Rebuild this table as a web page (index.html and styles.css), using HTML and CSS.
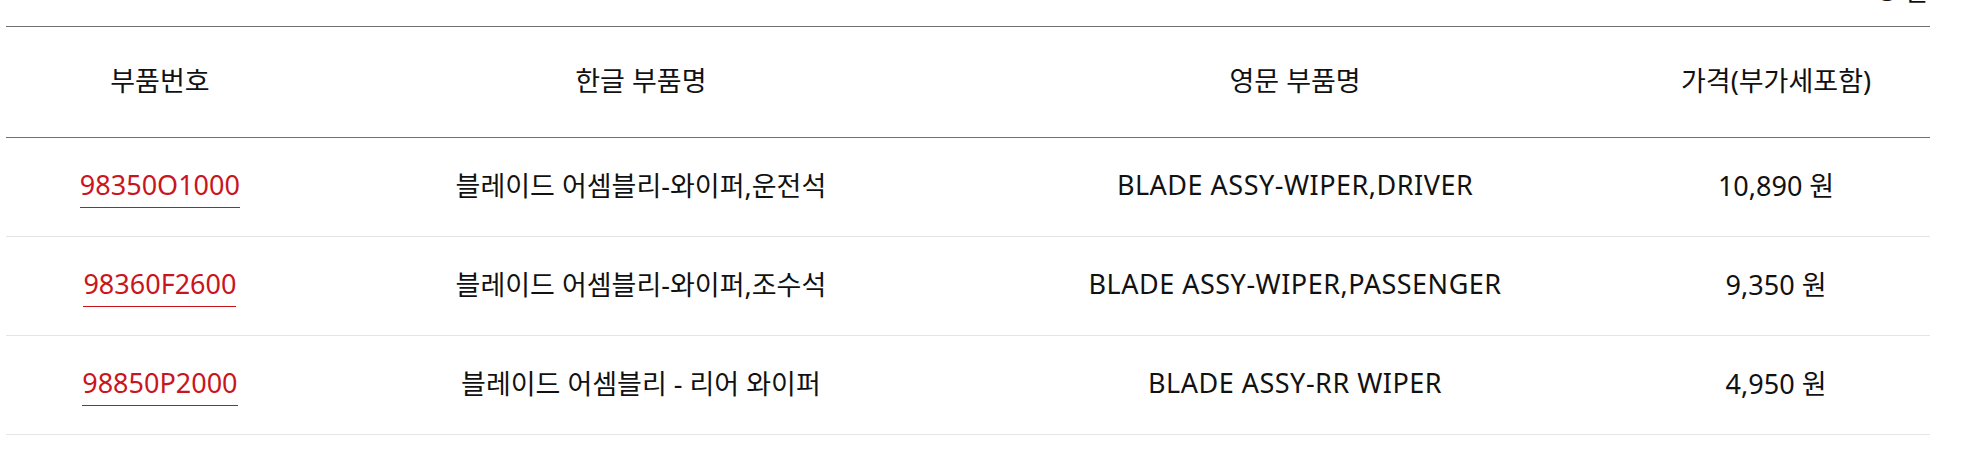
FILE: index.html
```html
<!DOCTYPE html>
<html lang="ko">
<head>
<meta charset="utf-8">
<title>부품 목록</title>
<link rel="stylesheet" href="styles.css">
</head>
<body>
<div class="count"><span class="count-text">3 건</span></div>
<div class="table">
  <div class="row head">
    <div class="cell">부품번호</div>
    <div class="cell">한글 부품명</div>
    <div class="cell">영문 부품명</div>
    <div class="cell">가격(부가세포함)</div>
  </div>
  <div class="row">
    <div class="cell"><a class="pn" href="#">98350O1000</a></div>
    <div class="cell">블레이드 어셈블리-와이퍼,운전석</div>
    <div class="cell en">BLADE ASSY-WIPER,DRIVER</div>
    <div class="cell">10,890 원</div>
  </div>
  <div class="row">
    <div class="cell"><a class="pn" href="#">98360F2600</a></div>
    <div class="cell">블레이드 어셈블리-와이퍼,조수석</div>
    <div class="cell en">BLADE ASSY-WIPER,PASSENGER</div>
    <div class="cell">9,350 원</div>
  </div>
  <div class="row">
    <div class="cell"><a class="pn" href="#">98850P2000</a></div>
    <div class="cell">블레이드 어셈블리 - 리어 와이퍼</div>
    <div class="cell en">BLADE ASSY-RR WIPER</div>
    <div class="cell">4,950 원</div>
  </div>
</div>
</body>
</html>
```
FILE: styles.css
```css
html, body {
  margin: 0;
  padding: 0;
  background: #fff;
}
body {
  font-family: "Noto Sans", "Noto Sans CJK KR", sans-serif;
  font-size: 27px;
  color: #111;
}
.count {
  width: 1928px;
  height: 26px;
  overflow: hidden;
  text-align: right;
}
.count-text {
  display: block;
  line-height: 20px;
  margin-top: -19px;
}
.table {
  margin-left: 6px;
  width: 1924px;
  border-top: 1px solid #707070;
}
.row {
  display: grid;
  grid-template-columns: 16% 34% 34% 16%;
  height: 98px;
  border-bottom: 1px solid #e4e4e4;
  align-items: center;
}
.row.head {
  height: 110px;
  border-bottom-color: #707070;
}
.cell {
  text-align: center;
  white-space: nowrap;
  padding-bottom: 6px;
}
.cell.en {
  letter-spacing: 0.5px;
}
.pn {
  color: #c9151e;
  text-decoration: none;
  border-bottom: 1px solid #c9151e;
  padding-bottom: 4px;
}
```
